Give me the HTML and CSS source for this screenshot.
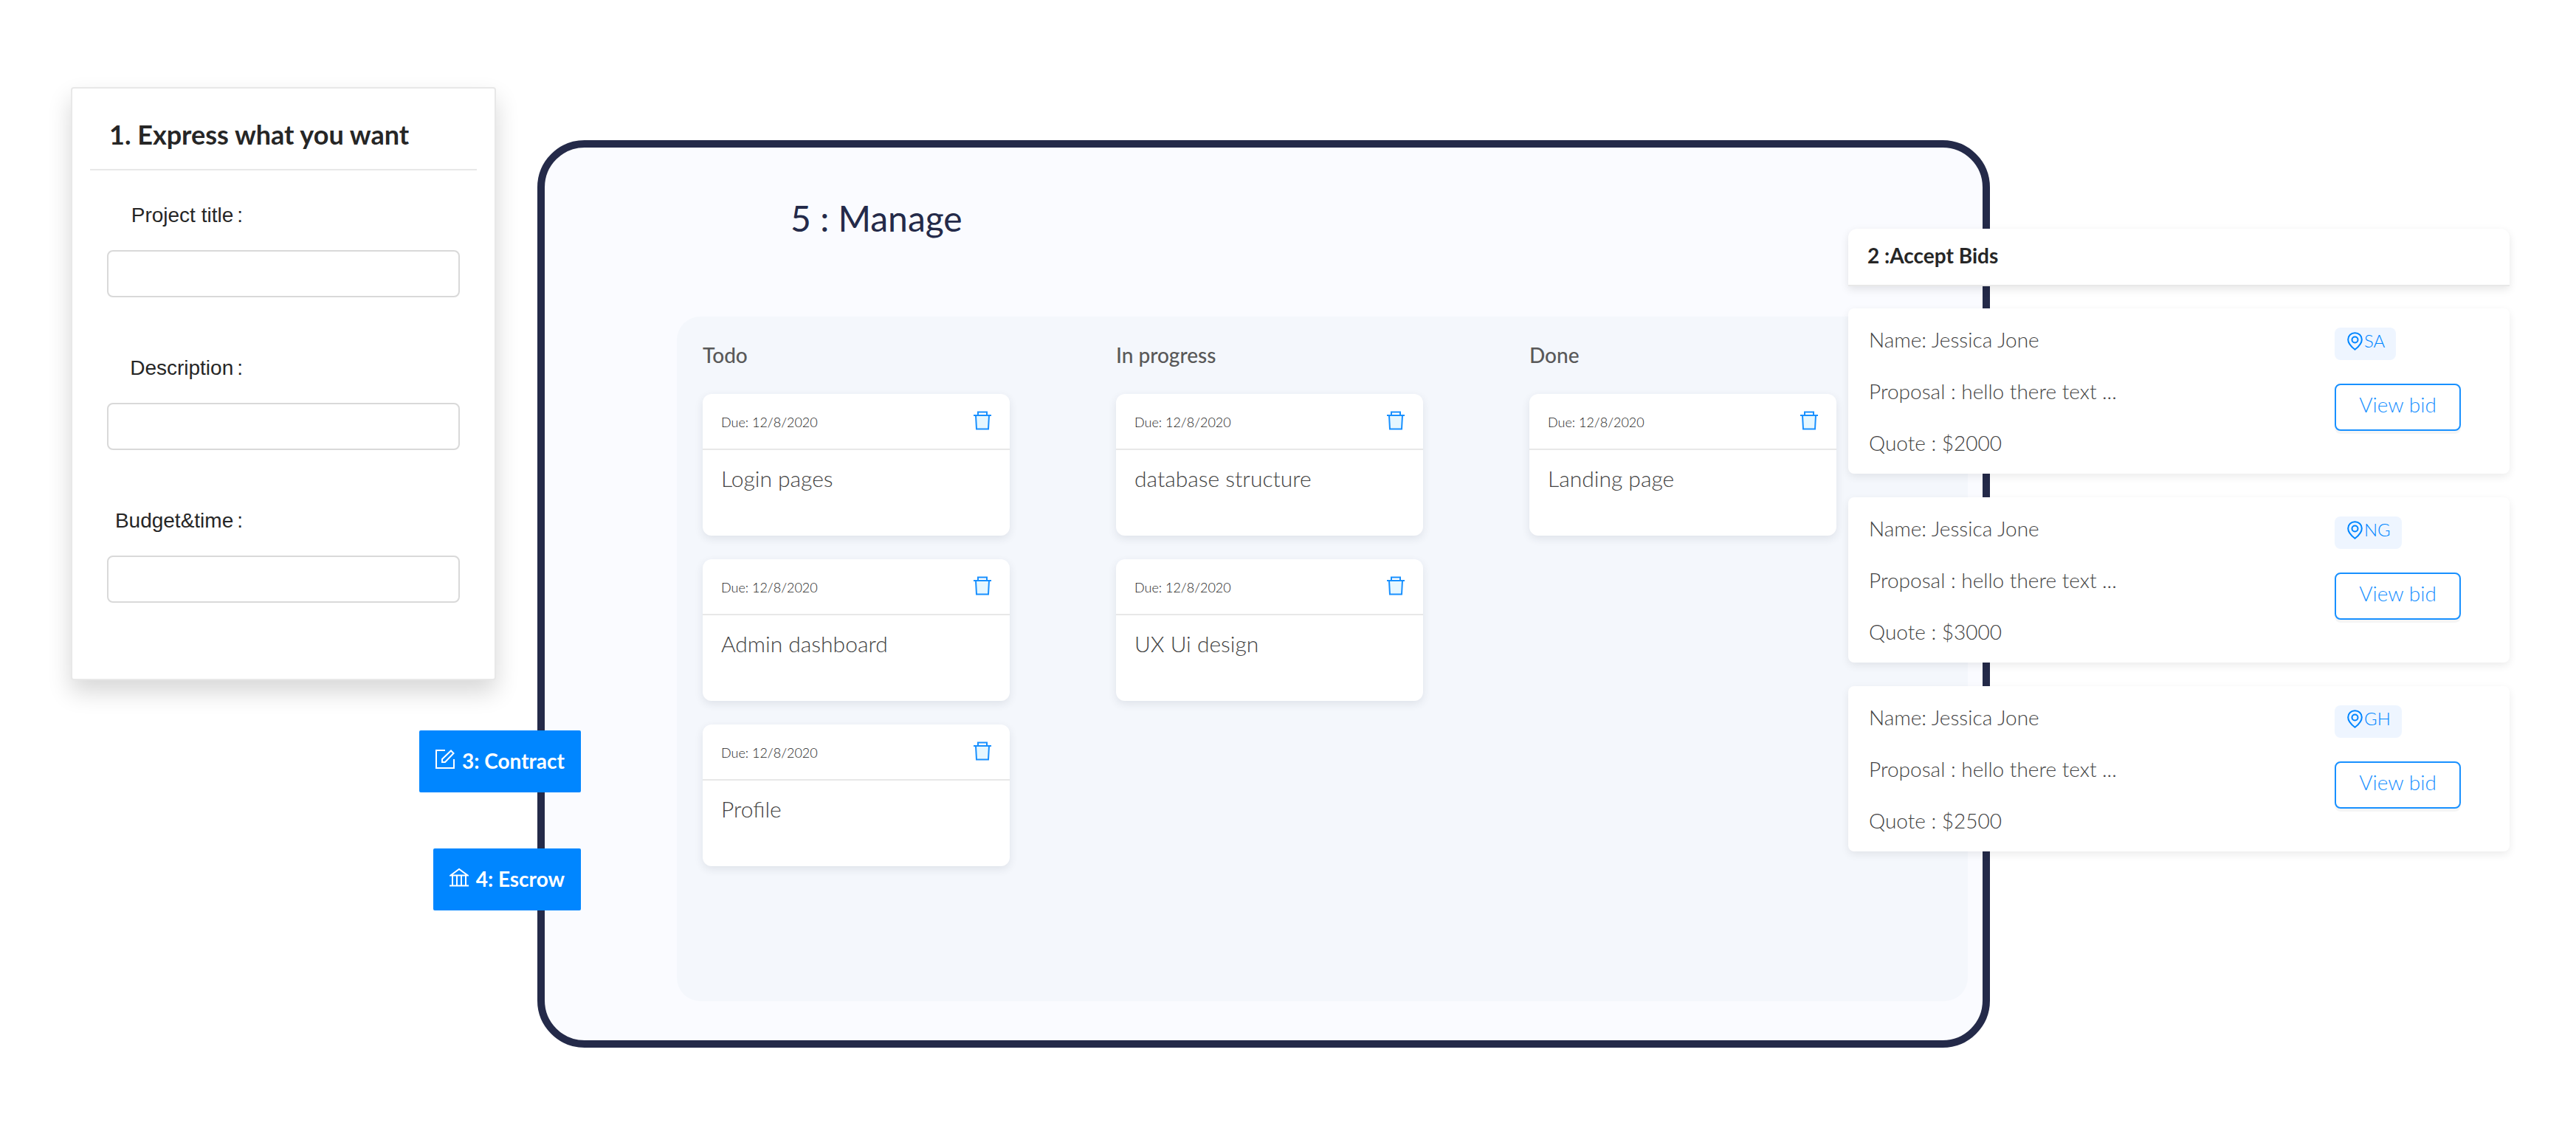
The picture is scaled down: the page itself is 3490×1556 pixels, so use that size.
FILE: index.html
```html
<!DOCTYPE html>
<html lang="en">
<head>
  <meta charset="utf-8">
  <meta name="viewport" content="width=device-width, initial-scale=1">
  <title>How it works</title>
  <link rel="stylesheet" href="styles.css">
</head>
<body>
  <svg class="sprite" aria-hidden="true">
    <symbol id="icon-trash" viewBox="0 0 24 26">
      <path d="M3 6h18l-1 18.500H4z" fill="#e6f7ff"/>
      <path d="M0 6h24M6 6V1.500h12V6M3 6l1 18.500h16L21 6" fill="none" stroke="currentColor" stroke-width="2"/>
    </symbol>
    <symbol id="icon-edit" viewBox="0 0 26 26">
      <path d="M13 1H1v24h24V13M9 17v-4L21 1.500l3.500 3.500L13 17z" fill="none" stroke="currentColor" stroke-width="2"/>
    </symbol>
    <symbol id="icon-bank" viewBox="0 0 26 26">
      <path d="M0 24.500h26M1.500 10.500L13 2l11.500 8.500zM4 11v13M10 11v13M16 11v13M22 11v13" fill="none" stroke="currentColor" stroke-width="2"/>
    </symbol>
    <symbol id="icon-pin" viewBox="0 0 21 25">
      <path d="M10.500 1.200c-5.200 0-9.300 4-9.300 9.100 0 5.700 4 9.500 9.300 13.500 5.300-4 9.300-7.800 9.300-13.500 0-5.100-4.100-9.100-9.300-9.100z" fill="none" stroke="currentColor" stroke-width="2"/>
      <circle cx="10.500" cy="10.500" r="4" fill="none" stroke="currentColor" stroke-width="2"/>
    </symbol>
  </svg>

  <main class="showcase">
    <form class="brief">
      <h2 class="brief-title">1. Express what you want</h2>
      <div class="field">
        <label class="field-label" for="title"><span>Project title</span><span>:</span></label>
        <input class="field-input" id="title" type="text">
      </div>
      <div class="field">
        <label class="field-label" for="description"><span>Description</span><span>:</span></label>
        <input class="field-input" id="description" type="text">
      </div>
      <div class="field">
        <label class="field-label" for="budget"><span>Budget&amp;time</span><span>:</span></label>
        <input class="field-input" id="budget" type="text">
      </div>
    </form>

    <section class="manage">
      <h2 class="manage-title">5 : Manage</h2>
      <div class="board">
        <section class="column">
          <h3 class="column-title">Todo</h3>
          <article class="task">
            <header class="task-head">Due: 12/8/2020
              <button class="icon-button" type="button" aria-label="Delete"><svg class="icon-trash"><use href="#icon-trash"/></svg></button>
            </header>
            <p class="task-name">Login pages</p>
          </article>
          <article class="task">
            <header class="task-head">Due: 12/8/2020
              <button class="icon-button" type="button" aria-label="Delete"><svg class="icon-trash"><use href="#icon-trash"/></svg></button>
            </header>
            <p class="task-name">Admin dashboard</p>
          </article>
          <article class="task">
            <header class="task-head">Due: 12/8/2020
              <button class="icon-button" type="button" aria-label="Delete"><svg class="icon-trash"><use href="#icon-trash"/></svg></button>
            </header>
            <p class="task-name">Profile</p>
          </article>
        </section>
        <section class="column">
          <h3 class="column-title">In progress</h3>
          <article class="task">
            <header class="task-head">Due: 12/8/2020
              <button class="icon-button" type="button" aria-label="Delete"><svg class="icon-trash"><use href="#icon-trash"/></svg></button>
            </header>
            <p class="task-name">database structure</p>
          </article>
          <article class="task">
            <header class="task-head">Due: 12/8/2020
              <button class="icon-button" type="button" aria-label="Delete"><svg class="icon-trash"><use href="#icon-trash"/></svg></button>
            </header>
            <p class="task-name">UX Ui design</p>
          </article>
        </section>
        <section class="column">
          <h3 class="column-title">Done</h3>
          <article class="task">
            <header class="task-head">Due: 12/8/2020
              <button class="icon-button" type="button" aria-label="Delete"><svg class="icon-trash"><use href="#icon-trash"/></svg></button>
            </header>
            <p class="task-name">Landing page</p>
          </article>
        </section>
      </div>

      <div class="steps">
        <button class="step" type="button"><svg class="icon-step"><use href="#icon-edit"/></svg>3: Contract</button>
        <button class="step" type="button"><svg class="icon-step"><use href="#icon-bank"/></svg>4: Escrow</button>
      </div>
    </section>

    <section class="bids">
      <h2 class="bids-title">2 :Accept Bids</h2>
      <article class="bid">
        <div class="bid-info">
          <p class="bid-line">Name: Jessica Jone</p>
          <p class="bid-line">Proposal : hello there text ...</p>
          <p class="bid-line">Quote : $2000</p>
        </div>
        <div class="bid-side">
          <span class="place"><svg class="icon-pin"><use href="#icon-pin"/></svg>SA</span>
          <button class="view" type="button">View bid</button>
        </div>
      </article>
      <article class="bid">
        <div class="bid-info">
          <p class="bid-line">Name: Jessica Jone</p>
          <p class="bid-line">Proposal : hello there text ...</p>
          <p class="bid-line">Quote : $3000</p>
        </div>
        <div class="bid-side">
          <span class="place"><svg class="icon-pin"><use href="#icon-pin"/></svg>NG</span>
          <button class="view" type="button">View bid</button>
        </div>
      </article>
      <article class="bid">
        <div class="bid-info">
          <p class="bid-line">Name: Jessica Jone</p>
          <p class="bid-line">Proposal : hello there text ...</p>
          <p class="bid-line">Quote : $2500</p>
        </div>
        <div class="bid-side">
          <span class="place"><svg class="icon-pin"><use href="#icon-pin"/></svg>GH</span>
          <button class="view" type="button">View bid</button>
        </div>
      </article>
    </section>
  </main>
</body>
</html>
```
FILE: styles.css
```css
* {
  box-sizing: border-box;
}

body {
  margin: 0;
  background: #fff;
  color: #262626;
  font-family: Lato, "Open Sans", sans-serif;
  font-size: 28px;
  line-height: 44px;
}

h2,
h3,
p {
  margin: 0;
}

button {
  font: inherit;
  cursor: pointer;
}

.sprite {
  position: absolute;
  width: 0;
  height: 0;
}

.showcase {
  position: relative;
  display: flex;
  align-items: flex-start;
  gap: 56px;
  padding: 118px 794px 136px 96px;
}

/* Project brief form */

.brief {
  flex: none;
  width: 576px;
  padding: 0 24px 68px;
  border: 2px solid #e8e8e8;
  border-radius: 4px;
  background: #fff;
  box-shadow: 0 16px 32px rgba(0, 0, 0, 0.16);
}

.brief-title {
  height: 111px;
  padding: 0 26px;
  border-bottom: 2px solid #e8e8e8;
  font-size: 36px;
  font-weight: 700;
  line-height: 124px;
}

.field {
  padding: 39px 23px 35px;
}

.field-label {
  display: flex;
  justify-content: flex-end;
  gap: 5px;
  width: 184px;
  margin-bottom: 25px;
  font-family: "Liberation Sans", Arial, sans-serif;
}

.field-input {
  display: block;
  width: 100%;
  height: 64px;
  padding: 0 24px;
  border: 2px solid #d9d9d9;
  border-radius: 8px;
  background: #fff;
  color: inherit;
  font: inherit;
}

/* Board */

.manage {
  position: relative;
  flex: 1;
  margin-top: 72px;
  padding: 64px 20px 53px 179px;
  border: 10px solid #242a49;
  border-radius: 64px;
  background: #fafbff;
}

.manage-title {
  margin: 0 0 101px 154px;
  color: #242a49;
  font-size: 48px;
  font-weight: 400;
  line-height: 64px;
}

.board {
  display: flex;
  gap: 144px;
  min-height: 928px;
  padding: 30px 35px;
  border-radius: 32px;
  background: #f4f7fc;
}

.column {
  display: flex;
  flex-direction: column;
  gap: 32px;
  width: 416px;
}

.column-title {
  margin-bottom: -1px;
  color: #595959;
  font-size: 28px;
  font-weight: 500;
}

.task {
  height: 192px;
  border-radius: 12px;
  background: #fff;
  box-shadow: 0 4px 12px rgba(38, 50, 70, 0.1);
}

.task-head {
  display: flex;
  align-items: center;
  justify-content: space-between;
  height: 76px;
  padding: 2px 25px 0;
  border-bottom: 2px solid #e8e8e8;
  color: #262626;
  font-size: 18px;
  font-weight: 300;
}

.icon-button {
  display: flex;
  padding: 0 0 4px;
  border: 0;
  background: none;
  color: #1890ff;
}

.icon-trash {
  width: 24px;
  height: 26px;
}

.task-name {
  padding: 16px 25px;
  color: #434343;
  font-size: 30px;
  font-weight: 300;
}

/* Steps pinned over the frame edge */

.steps {
  position: absolute;
  top: 790px;
  left: -170px;
  display: flex;
  flex-direction: column;
  align-items: flex-end;
  gap: 76px;
}

.step {
  display: flex;
  align-items: center;
  gap: 10px;
  height: 84px;
  padding: 0 22px 2px;
  border: 0;
  border-radius: 2px;
  background: #0086ff;
  color: #fff;
  font-weight: 700;
  white-space: nowrap;
}

.icon-step {
  width: 26px;
  height: 26px;
  margin-bottom: 4px;
}

/* Bids panel over the right side of the frame */

.bids {
  position: absolute;
  top: 310px;
  right: 90px;
  display: flex;
  flex-direction: column;
  gap: 32px;
  width: 896px;
}

.bids-title {
  height: 78px;
  margin-bottom: -2px;
  padding: 14px 26px;
  border-bottom: 2px solid #e8e8e8;
  border-radius: 12px 12px 0 0;
  background: #fff;
  box-shadow: 0 4px 12px rgba(0, 0, 0, 0.1);
  font-size: 28px;
  font-weight: 700;
}

.bid {
  display: grid;
  grid-template-columns: 1fr 209px;
  height: 224px;
  padding: 20px 28px;
  border-radius: 8px;
  background: #fff;
  box-shadow: 0 4px 12px rgba(0, 0, 0, 0.08);
}

.bid-info {
  display: flex;
  flex-direction: column;
  gap: 26px;
}

.bid-line {
  color: #434343;
  font-weight: 300;
}

.bid-side {
  display: flex;
  flex-direction: column;
  align-items: flex-start;
  gap: 32px;
  padding-top: 6px;
}

.place {
  display: flex;
  align-items: center;
  gap: 2px;
  height: 44px;
  padding: 0 15px 8px 17px;
  border-radius: 8px;
  background: #eef5ff;
  color: #0086ff;
  font-size: 24px;
  font-weight: 300;
}

.icon-pin {
  width: 21px;
  height: 25px;
}

.view {
  width: 171px;
  height: 64px;
  padding: 0 0 8px;
  border: 2px solid #1890ff;
  border-radius: 8px;
  background: #fff;
  box-shadow: 0 4px 0 rgba(0, 0, 0, 0.04);
  color: #1890ff;
  font-weight: 300;
}
```
